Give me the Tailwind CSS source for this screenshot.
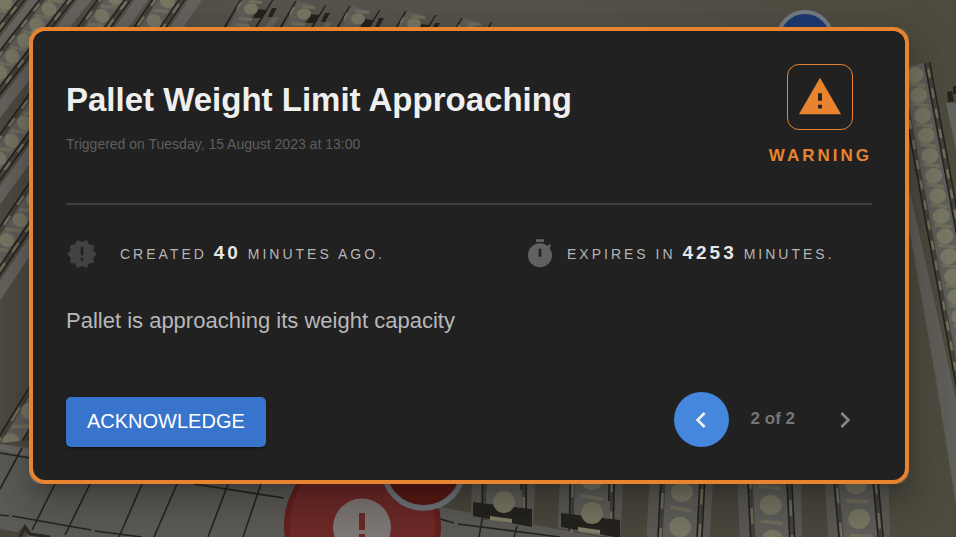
<!DOCTYPE html>
<html lang="en">
<head>
<meta charset="utf-8">
<meta name="viewport" content="width=device-width, initial-scale=1">
<title>Pallet Weight Limit Approaching</title>
<script src="https://cdn.jsdelivr.net/npm/@tailwindcss/browser@4"></script>
</head>
<body class="relative min-h-screen overflow-hidden bg-[#49463c] font-['Liberation_Sans',Arial,sans-serif]">

<!-- Warehouse floor scene behind the dialog -->
<svg class="absolute inset-0 h-full w-full" viewBox="0 0 956 537" preserveAspectRatio="xMidYMid slice" aria-hidden="true">
  <defs>
    <linearGradient id="ground" x1="0" y1="0" x2="1" y2="0">
      <stop offset="0" stop-color="#4d4a40"/><stop offset=".3" stop-color="#56544c"/>
      <stop offset=".6" stop-color="#54524a"/><stop offset="1" stop-color="#4d4a3e"/>
    </linearGradient>
    <clipPath id="leftArea"><path d="M0 0H500V60H34V340L30 440L0 443Z"/></clipPath>
  </defs>
  <rect width="956" height="537" fill="url(#ground)"/>
  <g id="left-lanes" clip-path="url(#leftArea)"></g>
  <g id="stub-lanes"></g>
  <g id="right-lanes"></g>

  <!-- Paved floor -->
  <path d="M0 444L34 448L280 483L450 505L600 537H0Z" fill="#5c5b57"/>
  <path d="M0 444L30 449L29 456L0 450Z" fill="#686762"/>
  <g stroke="#25241f" stroke-width="1.6" fill="none">
    <path d="M0 453L30 458M22 448L0 489M55 484L32 530M90 484L65 535M142 484L119 537M177 484L154 537M228 484L208 537M261 484L243 537"/>
    <path d="M0 515L9 516M12 516L91 530M95 531L142 537M194 484L284 498M440 519L454 523M458 524L560 537M482 520L479 537M517 526L514 537"/>
  </g>
  <path d="M0 529L18 532L24 526L30 531L26 537H0Z" fill="#47443a"/>
  <path d="M20 537L25 527L30 534L50 537" fill="none" stroke="#2c2a24" stroke-width="3"/>
  <g id="front-lanes"></g>

  <!-- Alert markers in the scene -->
  <circle cx="805" cy="39" r="27" fill="#1c3b70" stroke="#757c84" stroke-width="4"/>
  <circle cx="362.500" cy="526" r="78.500" fill="#64211f"/>
  <circle cx="362.500" cy="526" r="73" fill="#6d2a28"/>
  <circle cx="362" cy="527.500" r="29" fill="#7f7977"/>
  <path d="M359 513h6v17h-6zM359 534h6v6h-6z" fill="#6d2a28"/>
  <circle cx="423.500" cy="468" r="40" fill="#5c1a17" stroke="#71777c" stroke-width="5.500"/>
</svg>

<main class="relative pt-[27px] pr-[47px] pl-[29px]">
  <div class="rounded-xl bg-white/5 shadow-[0_11px_15px_-7px_rgba(0,0,0,.2),0_24px_38px_3px_rgba(0,0,0,.14),0_9px_46px_8px_rgba(0,0,0,.12)]">
    <section role="dialog" aria-labelledby="alert-title" class="rounded-2xl border-4 border-[#e8842f] bg-[#212121] p-[33px]">
      <header class="flex items-start justify-between border-b-2 border-[#3d3d3d] pb-[37px]">
        <div class="pt-4">
          <h1 id="alert-title" class="text-[33px] leading-10 font-bold text-[#efefef]">Pallet Weight Limit Approaching</h1>
          <p class="mt-4 text-[14px] leading-4 text-[#5f5f5f]">Triggered on Tuesday, 15 August 2023 at 13:00</p>
        </div>
        <div class="flex flex-col items-center text-[#e8842f]">
          <div class="flex size-[66px] items-center justify-center rounded-xl border border-[#e8842f]">
            <svg class="size-[46px]" viewBox="0 0 24 24" fill="currentColor" aria-hidden="true"><path d="M1 21h22L12 2 1 21zm12-3h-2v-2h2v2zm0-4h-2v-4h2v4z"/></svg>
          </div>
          <p class="mt-4 text-[17px] leading-5 font-bold tracking-[3px]">WARNING</p>
        </div>
      </header>

      <div class="mt-[33px] flex text-[14px] leading-8 tracking-[3px] text-[#b5b5b5]">
        <p class="flex w-[458px] items-center gap-[22px]">
          <svg class="size-8 text-[#424242]" viewBox="0 0 24 24" fill="currentColor" aria-hidden="true"><path d="M23 12l-2.440-2.780.340-3.680-3.610-.820-1.890-3.180L12 3 8.600 1.540 6.710 4.720l-3.610.810.340 3.680L1 12l2.440 2.780-.340 3.690 3.610.820 1.890 3.180L12 21l3.400 1.460 1.890-3.180 3.610-.820-.340-3.680L23 12zm-10 5h-2v-2h2v2zm0-4h-2V7h2v6z"/></svg>
          <span class="-mt-[2px]">CREATED <strong class="text-[19px] text-[#e6e6e6]">40</strong> MINUTES AGO.</span>
        </p>
        <p class="flex items-center gap-[11px]">
          <svg class="size-8 text-[#616161]" viewBox="0 0 24 24" fill="currentColor" aria-hidden="true"><path d="M9 1h6v2H9zM19.030 7.390l1.420-1.420c-.430-.510-.900-.990-1.410-1.410l-1.420 1.420C16.070 4.740 14.120 4 12 4c-4.970 0-9 4.030-9 9s4.020 9 9 9 9-4.030 9-9c0-2.120-.740-4.070-1.970-5.610zM13 14h-2V8h2v6z"/></svg>
          <span class="-mt-[2px]">EXPIRES IN <strong class="text-[19px] text-[#e6e6e6]">4253</strong> MINUTES.</span>
        </p>
      </div>

      <p class="mt-[37px] text-[22px] leading-7 text-[#b8b8b8]">Pallet is approaching its weight capacity</p>

      <footer class="mt-[57px] flex items-end justify-between">
        <button type="button" class="h-[50px] rounded-[5px] bg-[#3874cb] px-[21px] pb-[2px] text-[20px] text-white shadow-[0_3px_1px_-2px_rgba(0,0,0,.2),0_2px_2px_0_rgba(0,0,0,.14),0_1px_5px_0_rgba(0,0,0,.12)]">ACKNOWLEDGE</button>
        <nav class="flex items-center gap-[22px]" aria-label="Alerts">
          <button type="button" aria-label="Previous alert" class="flex size-[55px] items-center justify-center rounded-full bg-[#4487dd] text-[#f0f0f0]">
            <svg class="size-8" viewBox="0 0 24 24" fill="currentColor" aria-hidden="true"><path d="M15.410 7.410L14 6l-6 6 6 6 1.410-1.410L10.830 12z"/></svg>
          </button>
          <span class="pb-[2px] text-[17px] font-bold text-[#777]">2 of 2</span>
          <button type="button" aria-label="Next alert" class="flex size-[55px] items-center justify-center rounded-full text-[#858585]">
            <svg class="size-8" viewBox="0 0 24 24" fill="currentColor" aria-hidden="true"><path d="M10 6L8.590 7.410 13.170 12l-4.580 4.590L10 18l6-6z"/></svg>
          </button>
        </nav>
      </footer>
    </section>
  </div>
</main>

<script>
  const NS = 'http://www.w3.org/2000/svg';
  function shape(group, d, fill) {
    const p = document.createElementNS(NS, 'path');
    p.setAttribute('d', d);
    p.setAttribute('fill', fill);
    document.getElementById(group).append(p);
  }
  // One storage lane: a roller bed running from the first item position to the end point.
  function lane(group, x1, y1, x2, y2, o) {
    const g = document.createElementNS(NS, 'g');
    const len = Math.hypot(x2 - x1, y2 - y1);
    const angle = Math.atan2(y2 - y1, x2 - x1) * 180 / Math.PI;
    g.setAttribute('transform', `translate(${x1} ${y1}) rotate(${angle})`);
    const { step, r, w, from = -step, skew = 0, beam = 0, beamW = 9, bar = r } = o;
    let s = '';
    const rect = (x, y, l, h, c) => { s += `<rect x="${x}" y="${y}" width="${l}" height="${h}" fill="${c}"/>`; };
    if (beam) rect(from, beam, len - from, beamW, '#64635e');
    rect(from, -w / 2 - 5, len - from, w + 10, '#45423a');
    rect(from, -w / 2, len - from, w, '#5f5e5a');
    rect(from, -w / 2 - 1, len - from, 1.5, '#25231f');
    rect(from, w / 2 + 4, len - from, 1.5, '#25231f');
    rect(from, -w / 2 - 6, len - from, 1.5, '#25231f');
    const start = Math.ceil(from / step) * step;
    for (let d = start; d <= len; d += step) {
      s += `<rect x="${d + step / 2 - 2}" y="${-bar}" width="3.5" height="${2 * bar}" fill="#706f5c" transform="rotate(${skew} ${d + step / 2} 0)"/>`;
      s += `<ellipse cx="${d}" cy="0" rx="${r * .92}" ry="${r}" fill="#787764"/>`;
      rect(d + 2, w / 2 + 1, step * .45, 2.5, '#706f5c');
      rect(d - 4, -w / 2 - 4, step * .45, 2.5, '#706f5c');
    }
    g.innerHTML = s;
    document.getElementById(group).append(g);
  }

  const L = { step: 20, r: 7.5, w: 17, from: -60, skew: -32, beam: -28, beamW: 11 };
  lane('left-lanes', 5, 3, -40, 61, L);
  lane('left-lanes', 49, 9, -48, 134, L);
  lane('left-lanes', 102, 16, -42, 215, { ...L, step: 22 });
  lane('left-lanes', 154, 21, -59, 338, { ...L, step: 24 });
  lane('left-lanes', 181, 166, -6, 470, { ...L, step: 36, from: -30, r: 9 });

  // Lane heads along the far wall
  for (const [x, y] of [[251, 9], [304, 14], [358, 19], [414, 24], [470, 31]]) {
    shape('stub-lanes', `M${x - 6} ${y - 13}L${x + 8} ${y - 9}L${x - 10} ${y + 26}H${x - 26}Z`, '#5f5e5a');
    shape('stub-lanes', `M${x - 9} ${y - 13}h1.500L${x - 26} ${y + 20}h-2.500ZM${x + 21} ${y - 9}h1.500L${x + 4} ${y + 22}h-2.500Z`, '#25231f');
    shape('stub-lanes', `M${x + 6} ${y}l9 1l-4 8h-9zM${x + 21} ${y - 1}h5l-5 9h-4z`, '#25231f');
    shape('stub-lanes', `M${x + 22} ${y + 8}h7L${x + 15} ${y + 26}h-7Z`, '#64635e');
    shape('stub-lanes', `M${x - 2} ${y - 9}l13 1v3l-13 -1zM${x - 12} ${y + 8}l13 1v3l-13 -1zM${x - 15} ${y + 14}l13 1v3l-13 -1z`, '#706f5c');
    shape('stub-lanes', `M${x - 14} ${y - 2}l3 -5l2 1l-5 9z`, '#706f5c');
    shape('stub-lanes', `M${x - 7} ${y}a7 5.500 0 1 0 14 0a7 5.500 0 1 0 -14 0`, '#787764');
  }

  // Upright and lanes along the right wall
  shape('right-lanes', 'M905 170L943 340L956 400V505L936 380L905 205Z', '#5f5e59');
  lane('right-lanes', 915, 75, 1000, 533, { step: 20.5, r: 8.5, w: 23, from: -10, skew: 18 });
  shape('right-lanes', 'M947 92l5 -1l2 10l-6 1zM953 86h3v8h-3z', '#25231f');
  shape('right-lanes', 'M946 103H956V150Z', '#64635e');

  // Lanes leaving the bottom edge
  shape('front-lanes', 'M455 470H830L850 537H600L440 507Z', '#4b483e');
  for (const [x, y, dx, end] of [[504, 501, 0, 522], [592, 480, -1, 533], [682, 492, -3, 552], [769, 470, 4, 552], [856, 484, 6, 552]]) {
    shape('front-lanes', `M${x - 32} 470H${x + 32}L${x + 29 + dx} ${end + 6}L${x - 33 + dx} ${end - 5}Z`, '#5b5a55');
    lane('front-lanes', x, y, x + dx, end - 2, { step: 35, r: 11, w: 34, from: -30, skew: 8 });
    if (end < 552) {
      const cy = end - 20;
      shape('front-lanes', `M${x - 31} ${cy}L${x + 28} ${cy + 7}V${end + 5}L${x - 31} ${end - 6}Z`, '#25231f');
      shape('front-lanes', `M${x - 18} ${cy - 12}H${x + 18}V${cy + 6}L${x - 18} ${cy + 1}Z`, '#5f5e5a');
      shape('front-lanes', `M${x - 14} ${end - 6}l22 3v4l-22 -3z`, '#82816a');
      shape('front-lanes', `M${x - 11} ${cy}a11 11 0 1 0 22 0a11 11 0 1 0 -22 0`, '#787764');
    }
  }
</script>
</body>
</html>
